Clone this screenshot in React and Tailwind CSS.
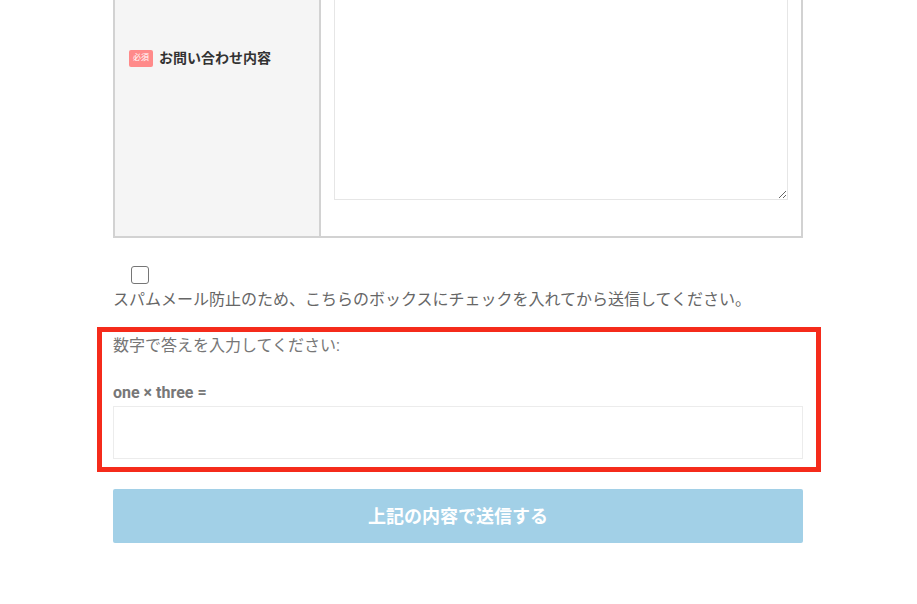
import React from 'react'

const jp = { fontFamily: "Roboto, 'Noto Sans CJK JP', sans-serif" }

export default function App(){
  return (
    <div className="min-h-[604px] bg-white overflow-hidden" style={jp}>
      <div className="ml-[113px] -mt-[122px] w-[690px]">
        <div className="flex h-[360px] border-2 border-[#d2d2d2]">
          <div className="flex w-[206px] items-center border-r-2 border-[#d2d2d2] bg-[#f5f5f5] pl-[14px]">
            <span className="flex h-[17px] w-[24px] items-center justify-center rounded-[2px] bg-[#ff8a8a] text-[8px] leading-none text-white">必須</span>
            <span className="ml-[6px] text-[14px] font-bold text-[#333]">お問い合わせ内容</span>
          </div>
          <div className="flex flex-1 px-[13px] pt-[36px] pb-[36px]">
            <textarea className="h-full w-full resize-y border border-[#e6e6e6] bg-white outline-none" />
          </div>
        </div>

        <div className="mt-[28px] pl-[18px]">
          <div className="h-[18px] w-[18px] rounded-[3px] border-[1.5px] border-[#767676] bg-white" />
        </div>
        <p className="mt-[4px] text-[16px] leading-[24px] text-[#666]">スパムメール防止のため、こちらのボックスにチェックを入れてから送信してください。</p>

        <div className="relative mt-[22px]">
          <span className="pointer-events-none absolute -top-[7px] -left-[16px] -right-[18px] -bottom-[13px] border-[5px] border-[#f52b1b]" />
          <p className="text-[16px] leading-[24px] text-[#777]">数字で答えを入力してください:</p>
          <p className="mt-[24px] text-[16px] font-bold leading-[22px] text-[#777]">one × three =</p>
          <input className="mt-[2px] block h-[53px] w-full border border-[#ececec] bg-white outline-none" />
        </div>

        <button className="mt-[30px] flex h-[54px] w-full items-center justify-center rounded-[2px] bg-[#a2d0e7] text-[18px] font-bold text-white">
          上記の内容で送信する
        </button>
      </div>
    </div>
  )
}
